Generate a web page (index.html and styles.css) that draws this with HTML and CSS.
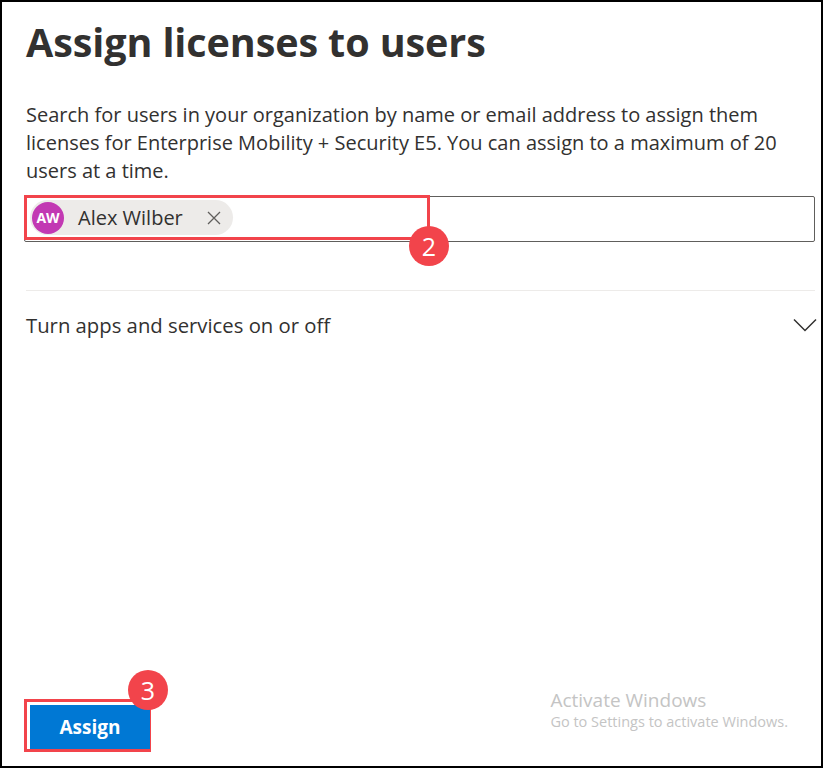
FILE: index.html
```html
<!DOCTYPE html>
<html>
<head>
<meta charset="utf-8">
<link rel="stylesheet" href="styles.css">
</head>
<body>
<div class="frame">
  <h1 class="title">Assign licenses to users</h1>
  <p class="desc">Search for users in your organization by name or email address to assign them licenses for Enterprise Mobility + Security E5. You can assign to a maximum of 20 users at a time.</p>
  <div class="picker">
    <div class="highlight">
      <div class="chip">
        <span class="avatar">AW</span>
        <span class="chip-name">Alex Wilber</span>
        <svg class="chip-x" width="14" height="14" viewBox="0 0 14 14"><path d="M1 1L13 13M13 1L1 13" stroke="#605e5c" stroke-width="1.3" fill="none"/></svg>
      </div>
      <span class="badge badge-2">2</span>
    </div>
  </div>
  <div class="divider"></div>
  <div class="section">
    <span class="section-title">Turn apps and services on or off</span>
    <svg class="chevron" width="24" height="14" viewBox="0 0 24 14"><path d="M1 1.5L12 12.5L23 1.5" stroke="#323130" stroke-width="1.5" fill="none"/></svg>
  </div>
  <div class="footer">
    <div class="btn-wrap">
      <button class="assign">Assign</button>
      <span class="badge badge-3">3</span>
    </div>
    <div class="watermark">
      <div class="wm1">Activate Windows</div>
      <div class="wm2">Go to Settings to activate Windows.</div>
    </div>
  </div>
</div>
</body>
</html>
```
FILE: styles.css
```css
html, body {
  margin: 0;
  padding: 0;
  background: #fff;
}
.frame {
  width: 823px;
  height: 768px;
  box-sizing: border-box;
  border: 2px solid #000;
  padding: 0 4px 0 22px;
  display: flex;
  flex-direction: column;
  font-family: "Open Sans", "Noto Sans", sans-serif;
  color: #323130;
}
.title {
  margin: 14px 0 0 2px;
  font-size: 39.5px;
  font-weight: 700;
  line-height: 52px;
  letter-spacing: -0.1px;
  color: #323130;
}
.desc {
  margin: 33px 0 0 2px;
  font-size: 20px;
  letter-spacing: 0;
  line-height: 28px;
  width: 768px;
}
.picker {
  margin-top: 11px;
  height: 46px;
  border: 1px solid #605e5c;
  border-radius: 2px;
  box-sizing: border-box;
  margin-right: 2px;
  display: flex;
  align-items: flex-start;
}
.highlight {
  position: relative;
  width: 406px;
  height: 45px;
  box-sizing: border-box;
  margin: -2px 0 0 -1px;
  border: 3px solid #f2444b;
  display: flex;
  align-items: center;
  padding-left: 3px;
}
.chip {
  display: flex;
  align-items: center;
  height: 35px;
  width: 203px;
  box-sizing: border-box;
  background: #edebe9;
  border-radius: 18px;
  padding-left: 2px;
}
.avatar {
  width: 32px;
  height: 32px;
  border-radius: 50%;
  background: #c239b3;
  color: #fff;
  font-size: 14px;
  font-weight: 700;
  display: flex;
  align-items: center;
  justify-content: center;
  font-family: "Open Sans", sans-serif;
}
.chip-name {
  margin-left: 14px;
  font-size: 20px;
  color: #323130;
}
.chip-x {
  margin-left: 24px;
}
.badge {
  position: absolute;
  width: 40px;
  height: 40px;
  border-radius: 50%;
  background: #f2444b;
  color: #fff;
  font-size: 25px;
  line-height: 40px;
  text-align: center;
  font-family: "Open Sans", sans-serif;
}
.badge-2 {
  right: -22px;
  bottom: -29px;
}
.divider {
  margin-top: 48px;
  height: 1px;
  background: #edebe9;
  margin-left: 2px;
  margin-right: 2px;
}
.section {
  display: flex;
  align-items: center;
  justify-content: space-between;
  margin-top: 20px;
  margin-left: 2px;
}
.section-title {
  font-size: 20.3px;
  font-weight: 500;
  line-height: 28px;
}
.chevron {
  margin-right: 0;
}
.footer {
  margin-top: auto;
  display: flex;
  align-items: flex-end;
  justify-content: space-between;
  padding-bottom: 14px;
}
.btn-wrap {
  position: relative;
  border: 3px solid #f2444b;
  width: 127px;
  height: 53px;
  box-sizing: border-box;
  padding: 3px 0 0 3px;
}
.assign {
  display: block;
  width: 120px;
  height: 44px;
  border: none;
  background: #0078d4;
  color: #fff;
  font-family: "Open Sans", sans-serif;
  font-size: 19px;
  font-weight: 700;
  padding: 0;
}
.badge-3 {
  right: -20px;
  top: -32px;
}
.watermark {
  color: #c4c4c4;
  margin-right: 29px;
  margin-bottom: 20px;
}
.wm1 {
  font-size: 19px;
  line-height: 24px;
}
.wm2 {
  font-size: 14.5px;
  line-height: 20px;
}
```
